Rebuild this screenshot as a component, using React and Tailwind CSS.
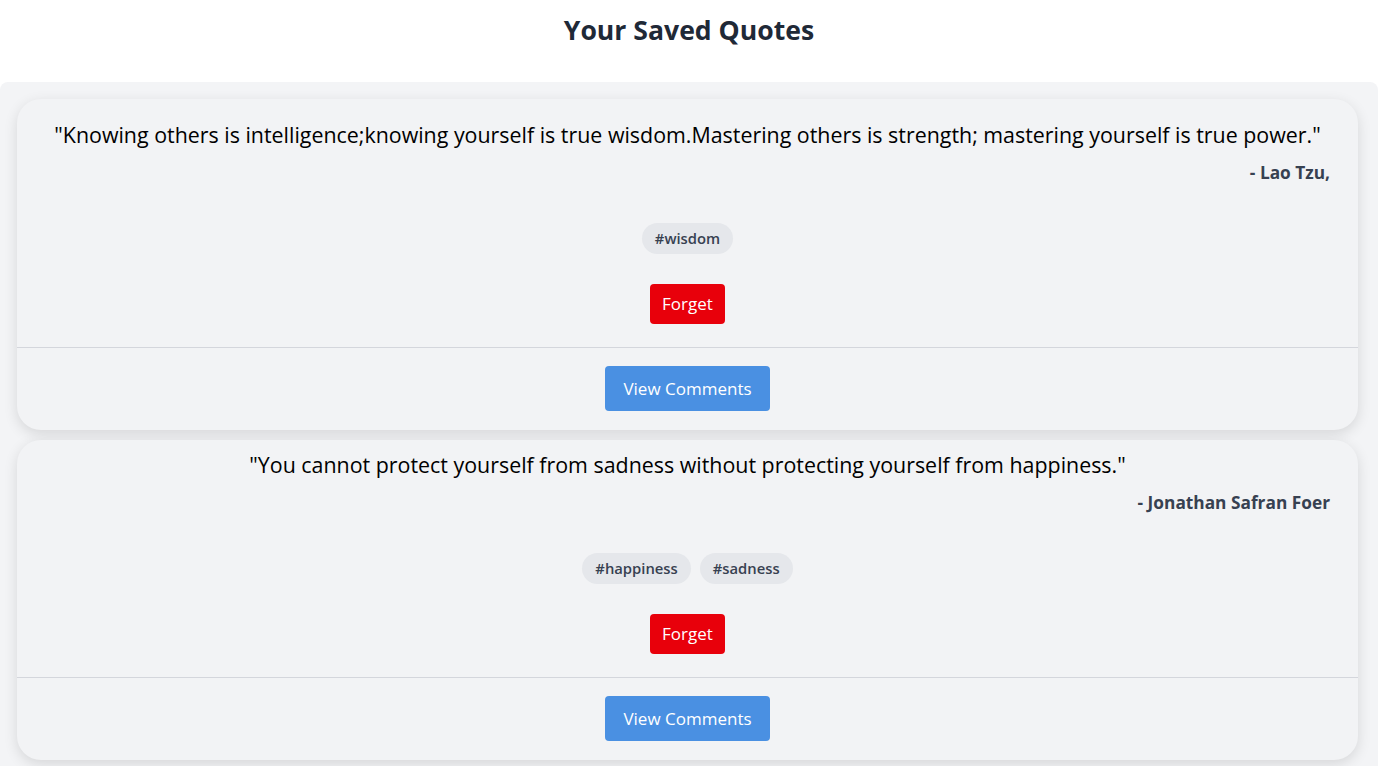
const QUOTES = [
  {
    id: 1,
    text: "Knowing others is intelligence;knowing yourself is true wisdom.Mastering others is strength; mastering yourself is true power.",
    author: "Lao Tzu,",
    tags: ["wisdom"],
  },
  {
    id: 2,
    text: "You cannot protect yourself from sadness without protecting yourself from happiness.",
    author: "Jonathan Safran Foer",
    tags: ["happiness", "sadness"],
  },
];

function QuoteCard({ quote, first }) {
  return (
    <div
      className={`rounded-3xl bg-[#f2f3f5] shadow-[0_4px_14px_rgba(0,0,0,0.12)] ${
        first ? "pt-[23px]" : "pt-[12px]"
      }`}
    >
      <p className="px-7 text-center text-[21.4px] leading-[26px] text-black">
        "{quote.text}"
      </p>
      <p className="mt-[13px] pr-[28px] text-right text-[17.3px] font-bold leading-[24px] text-[#374151]">
        - {quote.author}
      </p>
      <div className="mt-[38px] flex justify-center gap-[9px]">
        {quote.tags.map((tag) => (
          <span
            key={tag}
            className="rounded-full bg-[#e5e7eb] px-[13px] text-[14.8px] font-semibold leading-[31px] text-[#374151]"
          >
            #{tag}
          </span>
        ))}
      </div>
      <div className="mt-[30px] flex justify-center">
        <button
          type="button"
          className="h-[40px] rounded-[4px] bg-[#e8000b] px-[12px] text-[17px] text-white"
        >
          Forget
        </button>
      </div>
      <div className="mt-[23px] flex justify-center border-t border-[#d4d6dc] pt-[18px] pb-[19px]">
        <button
          type="button"
          className="h-[45px] rounded-[4px] bg-[#4a90e2] px-[18px] text-[17px] text-white"
        >
          View Comments
        </button>
      </div>
    </div>
  );
}

export default function App() {
  return (
    <main className="min-h-screen w-[1378px] bg-white font-['Open_Sans',sans-serif]">
      <h1 className="pt-[14px] text-center text-[26.6px] font-bold leading-[32px] text-[#1f2937]">
        Your Saved Quotes
      </h1>
      <section className="mt-[36px] rounded-lg bg-[#f3f4f6] pt-[17px] pb-4 pl-[17px] pr-[20px]">
        <div className="flex flex-col gap-[10px]">
          {QUOTES.map((q, i) => (
            <QuoteCard key={q.id} quote={q} first={i === 0} />
          ))}
        </div>
      </section>
    </main>
  );
}
